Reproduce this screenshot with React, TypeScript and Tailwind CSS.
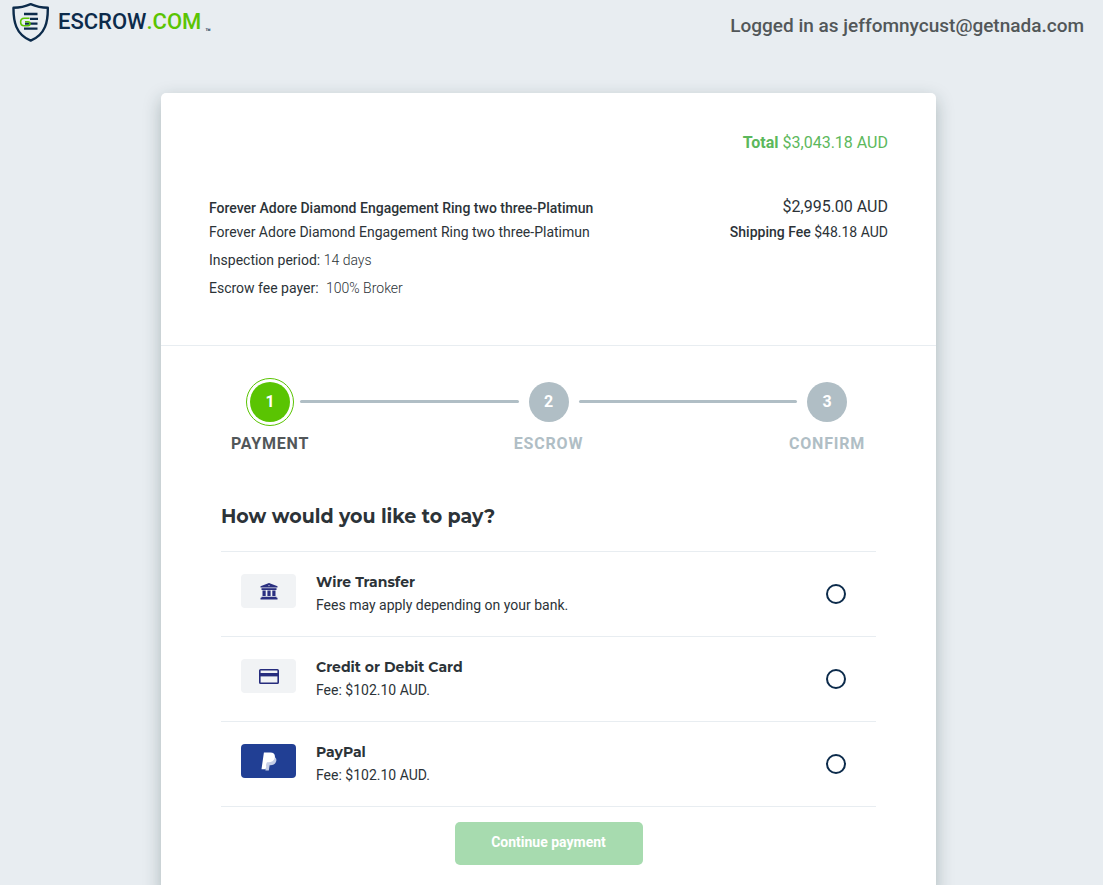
import React, { useState } from 'react';

interface PaymentMethod {
  id: string;
  name: string;
  note: string;
  icon: React.ReactNode;
  badgeClass: string;
}

const BankIcon = () => (
  <svg width="18" height="17" viewBox="0 0 18 17" fill="#2a2f80" aria-hidden="true">
    <path fillRule="evenodd" d="M9 0L17.5 3.2V4.4H0.5V3.2L9 0ZM9 2A0.6 0.6 0 1 0 9 3.2A0.6 0.6 0 1 0 9 2Z" />
    <path d="M1.5 5.2H16.5V7H1.5Z" />
    <path d="M2.5 7.6H5.7V13H2.5ZM7.4 7.6H10.6V13H7.4ZM12.3 7.6H15.5V13H12.3Z" />
    <path d="M1.5 13.8H16.5V14.8H1.5ZM0.5 14.8H17.5V16.4H0.5Z" />
  </svg>
);

const CardIcon = () => (
  <svg width="20" height="15" viewBox="0 0 20 15" aria-hidden="true">
    <rect x="0.8" y="0.8" width="18.4" height="13.4" rx="0.8" fill="#f1f3f5" stroke="#262c7d" strokeWidth="1.6" />
    <rect x="1" y="4" width="18" height="3.4" fill="#262c7d" />
  </svg>
);

const PayPalIcon = () => (
  <svg width="16" height="19" viewBox="0 0 16 19" aria-hidden="true">
    <path d="M4.4 18.4L6.4 6L13.4 4.8C15.2 5.8 15.7 7.4 15.2 9.2C14.4 12.2 12.2 13.3 9.4 13.3H8.6L7.8 18.4Z" fill="#c5cee6" />
    <path d="M2.9 0.5H9.4C12.8 0.5 14.4 2.4 13.8 5.4C13 8.8 10.6 10.3 7.4 10.3H6L4.7 17.2H0.5Z" fill="#fff" />
  </svg>
);

const ShieldLogo = () => (
  <svg width="38" height="39" viewBox="0 0 38 39" fill="none" aria-hidden="true">
    <path
      d="M18.7 1.2C13 3.7 7.2 4.8 1.5 4.8C1.3 18 3.6 31.5 18.7 37.6C33.8 31.5 36 18 35.8 4.8C30.2 4.8 24.4 3.7 18.7 1.2Z"
      stroke="#0c2b4b"
      strokeWidth="2.4"
      strokeLinejoin="round"
    />
    <path d="M12 11H25.5M18 15.9H26M13 20.6H25.5M12 25.6H25.5" stroke="#0c2b4b" strokeWidth="2.4" />
    <path
      d="M17.5 15.3H12.3C7.4 15.3 7.4 22.7 12.3 22.7H16C18.6 22.7 18.6 18.8 16 18.8H13"
      stroke="#5ac402"
      strokeWidth="1.6"
    />
  </svg>
);

const methods: PaymentMethod[] = [
  {
    id: 'wire',
    name: 'Wire Transfer',
    note: 'Fees may apply depending on your bank.',
    icon: <BankIcon />,
    badgeClass: 'bg-[#f1f3f5]',
  },
  {
    id: 'card',
    name: 'Credit or Debit Card',
    note: 'Fee: $102.10 AUD.',
    icon: <CardIcon />,
    badgeClass: 'bg-[#f1f3f5]',
  },
  {
    id: 'paypal',
    name: 'PayPal',
    note: 'Fee: $102.10 AUD.',
    icon: <PayPalIcon />,
    badgeClass: 'bg-[#213f94]',
  },
];

const steps = ['Payment', 'Escrow', 'Confirm'];

export default function App() {
  const [selected, setSelected] = useState('');
  const current = 0;

  return (
    <div className="min-h-screen bg-[#e8edf1] font-['Roboto',sans-serif] text-[#2c3338]">
      {/* Header */}
      <header className="flex items-start justify-between pl-3 pr-[19px] pt-[3px]">
        <a href="#" className="flex items-center gap-2">
          <ShieldLogo />
          <span className="flex items-end pb-0.5 text-[22px] font-medium leading-8 text-[#0c2b4b]">
            ESCROW<span className="text-[#5ac402]">.COM</span>
            <span className="ml-1 text-[9px] leading-3">™</span>
          </span>
        </a>
        <p className="pt-[9px] text-[19px] font-medium leading-7 text-[#525759]">Logged in as jeffomnycust@getnada.com</p>
      </header>

      <main className="pr-1.5 pt-[51px]">
        <div className="mx-auto max-w-[775px] rounded-[5px] bg-white pb-8 shadow-[0_6px_18px_rgba(20,50,50,0.28)]">
          {/* Order summary */}
          <section className="border-b border-[#e8edf1] px-12 pb-[45px] pt-[38px]">
            <p className="text-right text-[#5cb85c]">
              <strong className="font-bold">Total</strong> $3,043.18 AUD
            </p>
            <div className="mt-10 flex justify-between text-sm">
              <div>
                <h2 className="mt-px font-medium leading-6">Forever Adore Diamond Engagement Ring two three-Platimun</h2>
                <p className="leading-6">Forever Adore Diamond Engagement Ring two three-Platimun</p>
                <p className="mt-1 leading-6">
                  Inspection period: <span className="font-light">14 days</span>
                </p>
                <p className="mt-1 leading-6">
                  Escrow fee payer: <span className="ml-1 font-light">100% Broker</span>
                </p>
              </div>
              <div className="text-right">
                <p className="text-base">$2,995.00 AUD</p>
                <p className="mt-px leading-6">
                  <span className="font-medium">Shipping Fee</span> $48.18 AUD
                </p>
              </div>
            </div>
          </section>

          {/* Progress */}
          <ol className="flex px-[69px] pt-9">
            {steps.map((step, i) => (
              <React.Fragment key={step}>
                {i > 0 && (
                  <li aria-hidden="true" className="-mx-2.5 mt-[18px] h-[3px] flex-1 rounded-full bg-[#b0bec5]" />
                )}
                <li className="flex w-20 flex-col items-center">
                  <span
                    className={`flex h-10 w-10 items-center justify-center rounded-full font-bold text-white ${
                      i === current ? 'bg-[#5ac402] outline-1 outline-offset-3 outline-[#5ac402]' : 'bg-[#b0bec5]'
                    }`}
                  >
                    {i + 1}
                  </span>
                  <span
                    className={`mt-2.5 font-bold uppercase tracking-wider ${
                      i === current ? 'text-[#525759]' : 'text-[#b0bec5]'
                    }`}
                  >
                    {step}
                  </span>
                </li>
              </React.Fragment>
            ))}
          </ol>

          {/* Payment methods */}
          <section className="px-[60px] pt-[47px]">
            <h1 className="font-['Montserrat','Inter',sans-serif] text-[19px] font-bold leading-7">How would you like to pay?</h1>
            <div className="mt-5 border-t border-[#e8edf1]">
              {methods.map((method) => (
                <label
                  key={method.id}
                  htmlFor={method.id}
                  className="flex cursor-pointer items-start border-b border-[#e8edf1] pb-5 pl-5 pr-[30px] pt-[18px]"
                >
                  <span className={`mt-1 flex h-[34px] w-[55px] items-center justify-center rounded-[4px] ${method.badgeClass}`}>
                    {method.icon}
                  </span>
                  <span className="ml-5 flex-1">
                    <span className="block font-['Montserrat','Inter',sans-serif] text-sm font-bold leading-6">{method.name}</span>
                    <span className="block text-sm leading-[22px]">{method.note}</span>
                  </span>
                  <input
                    type="radio"
                    id={method.id}
                    name="method"
                    checked={selected === method.id}
                    onChange={() => setSelected(method.id)}
                    className="mt-3.5 h-5 w-5 appearance-none rounded-full border-2 border-[#0c2b4b] checked:border-[6px]"
                  />
                </label>
              ))}
            </div>
            <button
              type="button"
              disabled={!selected}
              className="mx-auto mt-[15px] block h-[43px] w-[188px] rounded-[5px] bg-[#4fb860] pb-[3px] text-sm font-bold text-white disabled:bg-[#a7dbaf]"
            >
              Continue payment
            </button>
          </section>
        </div>
      </main>
    </div>
  );
}
